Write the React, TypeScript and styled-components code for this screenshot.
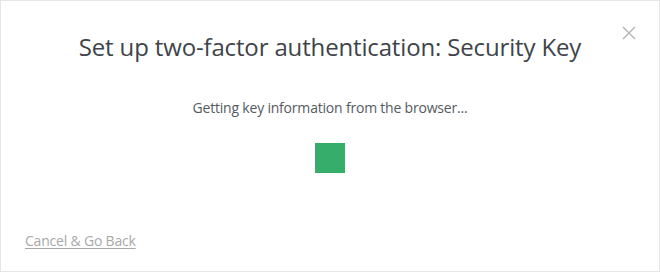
import React from "react";
import styled, { createGlobalStyle } from "styled-components";

const GlobalStyle = createGlobalStyle`
  html, body {
    margin: 0;
    padding: 0;
    background: #ffffff;
  }
  body {
    font-family: "Open Sans", "Noto Sans", sans-serif;
  }
`;

const Modal = styled.div`
  position: relative;
  box-sizing: border-box;
  width: 660px;
  height: 272px;
  border: 1px solid #e6e6e6;
  background: #ffffff;
  display: flex;
  flex-direction: column;
  align-items: center;
  padding: 31px 24px 0;
`;

const Title = styled.h1`
  margin: 0;
  font-size: 24px;
  font-weight: 400;
  line-height: 30px;
  letter-spacing: -0.15px;
  color: #3e4449;
  text-align: center;
`;

const Message = styled.p`
  margin: 36px 0 0;
  font-size: 14px;
  line-height: 20px;
  letter-spacing: -0.2px;
  color: #555a5e;
`;

const Spinner = styled.div`
  margin-top: 25px;
  width: 30px;
  height: 30px;
  background: #36ad6a;
`;

const Footer = styled.div`
  align-self: stretch;
  margin-top: auto;
  padding-bottom: 20px;
`;

const BackLink = styled.a`
  font-size: 14px;
  line-height: 20px;
  letter-spacing: -0.2px;
  color: #a8a8a8;
  text-decoration: underline;
  text-underline-offset: 2px;
  cursor: pointer;
`;

const CloseButton = styled.button`
  position: absolute;
  top: 24px;
  right: 22px;
  width: 16px;
  height: 16px;
  padding: 0;
  border: none;
  background: none;
  cursor: pointer;
  display: flex;
  align-items: center;
  justify-content: center;
`;

export default function App() {
  return (
    <>
      <GlobalStyle />
      <Modal>
        <CloseButton aria-label="Close">
          <svg width="14" height="14" viewBox="0 0 14 14">
            <path d="M1 1L13 13M13 1L1 13" stroke="#b3b3b3" strokeWidth="1.4" />
          </svg>
        </CloseButton>
        <Title>Set up two-factor authentication: Security Key</Title>
        <Message>Getting key information from the browser...</Message>
        <Spinner />
        <Footer>
          <BackLink>Cancel &amp; Go Back</BackLink>
        </Footer>
      </Modal>
    </>
  );
}
